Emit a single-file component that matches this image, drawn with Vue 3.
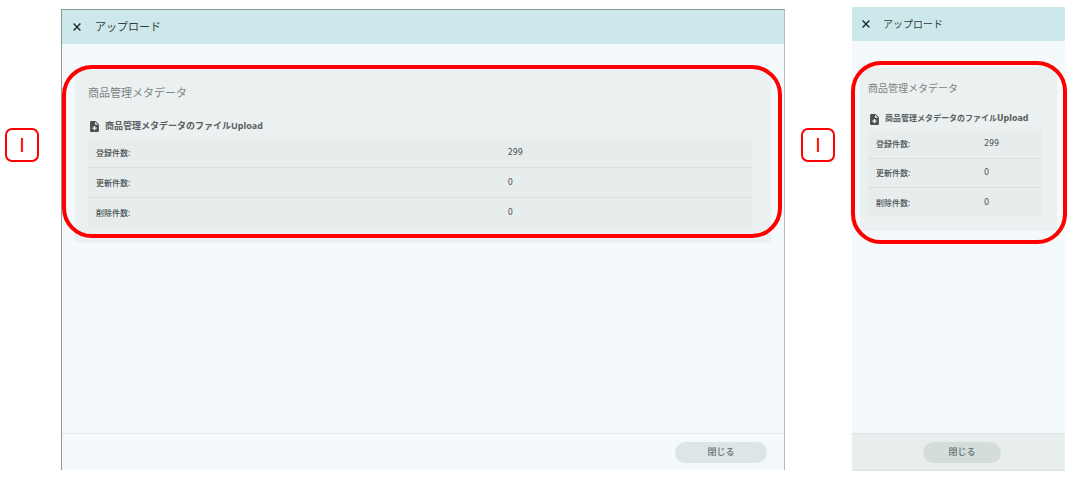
<script setup>
const screens = [
  { id: 'wide', kind: 'wide' },
  { id: 'narrow', kind: 'narrow' }
]
const rows = [
  { label: '登録件数:', value: 299 },
  { label: '更新件数:', value: 0 },
  { label: '削除件数:', value: 0 }
]
</script>

<template>
  <main class="page">
    <section v-for="s in screens" :key="s.id" class="figure" :class="s.kind">
      <div class="badge">I</div>
      <div class="window">
        <header class="bar">
          <button class="close" type="button" aria-label="Close">
            <svg viewBox="0 0 8 8" width="8" height="8"><path d="M.6.6 7.4 7.4M7.4.6.6 7.4" fill="none" stroke="currentColor" stroke-width="1.4" /></svg>
          </button>
          <h1>アップロード</h1>
        </header>
        <div class="body">
          <article class="card">
            <h2>商品管理メタデータ</h2>
            <h3>
              <svg class="file" viewBox="4 2 16 20" width="9" height="11"><path fill="currentColor" fill-rule="evenodd" d="M14 2H6a2 2 0 0 0-2 2v16a2 2 0 0 0 2 2h12a2 2 0 0 0 2-2V8ZM13 3.5 18.500 9H13ZM10.700 19v-2.700H8v-2.600h2.700V11h2.600v2.700H16v2.600h-2.700V19Z" /></svg>
              <span>商品管理メタデータのファイルUpload</span>
            </h3>
            <table>
              <tbody>
                <tr v-for="r in rows" :key="r.label">
                  <th scope="row">{{ r.label }}</th>
                  <td>{{ r.value }}</td>
                </tr>
              </tbody>
            </table>
            <div class="outline"></div>
          </article>
        </div>
        <footer><button class="done" type="button">閉じる</button></footer>
      </div>
    </section>
  </main>
</template>

<style>
body {
  margin: 0;
  background: #fff;
}
</style>

<style scoped>
* {
  box-sizing: border-box;
}
.page {
  display: flex;
  gap: 16px;
  min-height: 100vh;
  padding: 7px 11px 25px 5px;
  font-family: "Noto Sans", "Noto Sans CJK JP", sans-serif;
  color: #333c3c;
}
.figure {
  display: flex;
}
.wide {
  flex: 1;
  gap: 22px;
}
.narrow {
  flex: 0 0 264px;
  gap: 17px;
}
.badge {
  flex: none;
  display: flex;
  align-items: center;
  justify-content: center;
  width: 34px;
  height: 34px;
  margin-top: 121px;
  border: 2px solid #f00;
  border-radius: 7px;
  font: 20px/30px "Liberation Sans", sans-serif;
  color: #f00;
}
.window {
  flex: 1;
  min-width: 0;
  display: flex;
  flex-direction: column;
  background: #f4f9fc;
}
.wide .window {
  margin: 2px 0 1px;
  border: 1px solid #8b9999;
  border-width: 1px 1px 0;
  border-right-color: #b0bbbb;
}
.bar {
  display: flex;
  align-items: center;
  gap: 14px;
  height: 34px;
  padding: 0 11px;
  background: #cde8eb;
}
.narrow .bar {
  gap: 13px;
  padding: 0 10px;
}
.close {
  display: flex;
  padding: 0;
  border: 0;
  background: none;
  color: #202a2a;
}
h1,
h2,
h3 {
  margin: 0;
  font-weight: 400;
}
h1 {
  font-size: 11px;
  line-height: 16px;
}
.body {
  flex: 1;
  padding: 26px 13px 0;
}
.narrow .body {
  padding: 26px 8px 0;
}
.card {
  position: relative;
  padding: 13px 19px 15px 13px;
  border-radius: 4px;
  background: #ebf0f0;
}
.narrow .card {
  padding: 11px 15px 14px 8px;
}
h2 {
  font-size: 11px;
  line-height: 20px;
  color: #7d8484;
}
h3 {
  display: flex;
  align-items: center;
  gap: 6px;
  margin-top: 15px;
  padding-left: 2px;
  font-size: 9px;
  line-height: 16px;
  font-weight: 700;
  white-space: nowrap;
  color: #5a6161;
}
.narrow h3 {
  margin-top: 13px;
}
.file {
  flex: none;
  color: #4a5050;
}
table {
  width: 100%;
  margin-top: 4px;
  table-layout: fixed;
  border-collapse: separate;
  border-spacing: 0;
  background: #e7eded;
}
.narrow table {
  margin-top: 3px;
}
th,
td {
  height: 30px;
  padding: 0 8px;
  border-bottom: 1px solid #d9dfdf;
  text-align: left;
  line-height: 12px;
  font-size: 8px;
}
th {
  width: 62%;
  font-weight: 500;
  color: #4a5252;
}
td {
  font-family: "DejaVu Sans", sans-serif;
  color: #4c5454;
}
tr:last-child > * {
  border-bottom: 0;
}
.narrow th,
.narrow td {
  height: 29px;
}
.narrow h1,
.narrow h2 {
  font-size: 10px;
}
.narrow h3 {
  font-family: "DejaVu Sans", "Noto Sans CJK JP", sans-serif;
  font-size: 8px;
}
.outline {
  position: absolute;
  inset: -5px -11px 5px -13px;
  border: 4px solid #f00;
  border-radius: 30px;
  pointer-events: none;
}
.narrow .outline {
  inset: -6px -10px -13px -9px;
}
footer {
  display: flex;
  justify-content: flex-end;
  align-items: center;
  height: 37px;
  padding: 0 17px;
  border-top: 1px solid #e3eaeb;
}
.narrow footer {
  justify-content: center;
  height: 38px;
  padding: 0 0 0 7px;
  border-bottom: 1px solid #dde4e5;
  border-top-color: #dde4e5;
  background: #e7eeed;
}
.done {
  width: 92px;
  height: 21px;
  padding: 0;
  border: 0;
  border-radius: 11px;
  background: #dde6e6;
  font: 500 9px/18px "Noto Sans CJK JP", sans-serif;
  color: #667272;
}
.narrow .done {
  width: 78px;
  background: #d5dddc;
}
</style>
